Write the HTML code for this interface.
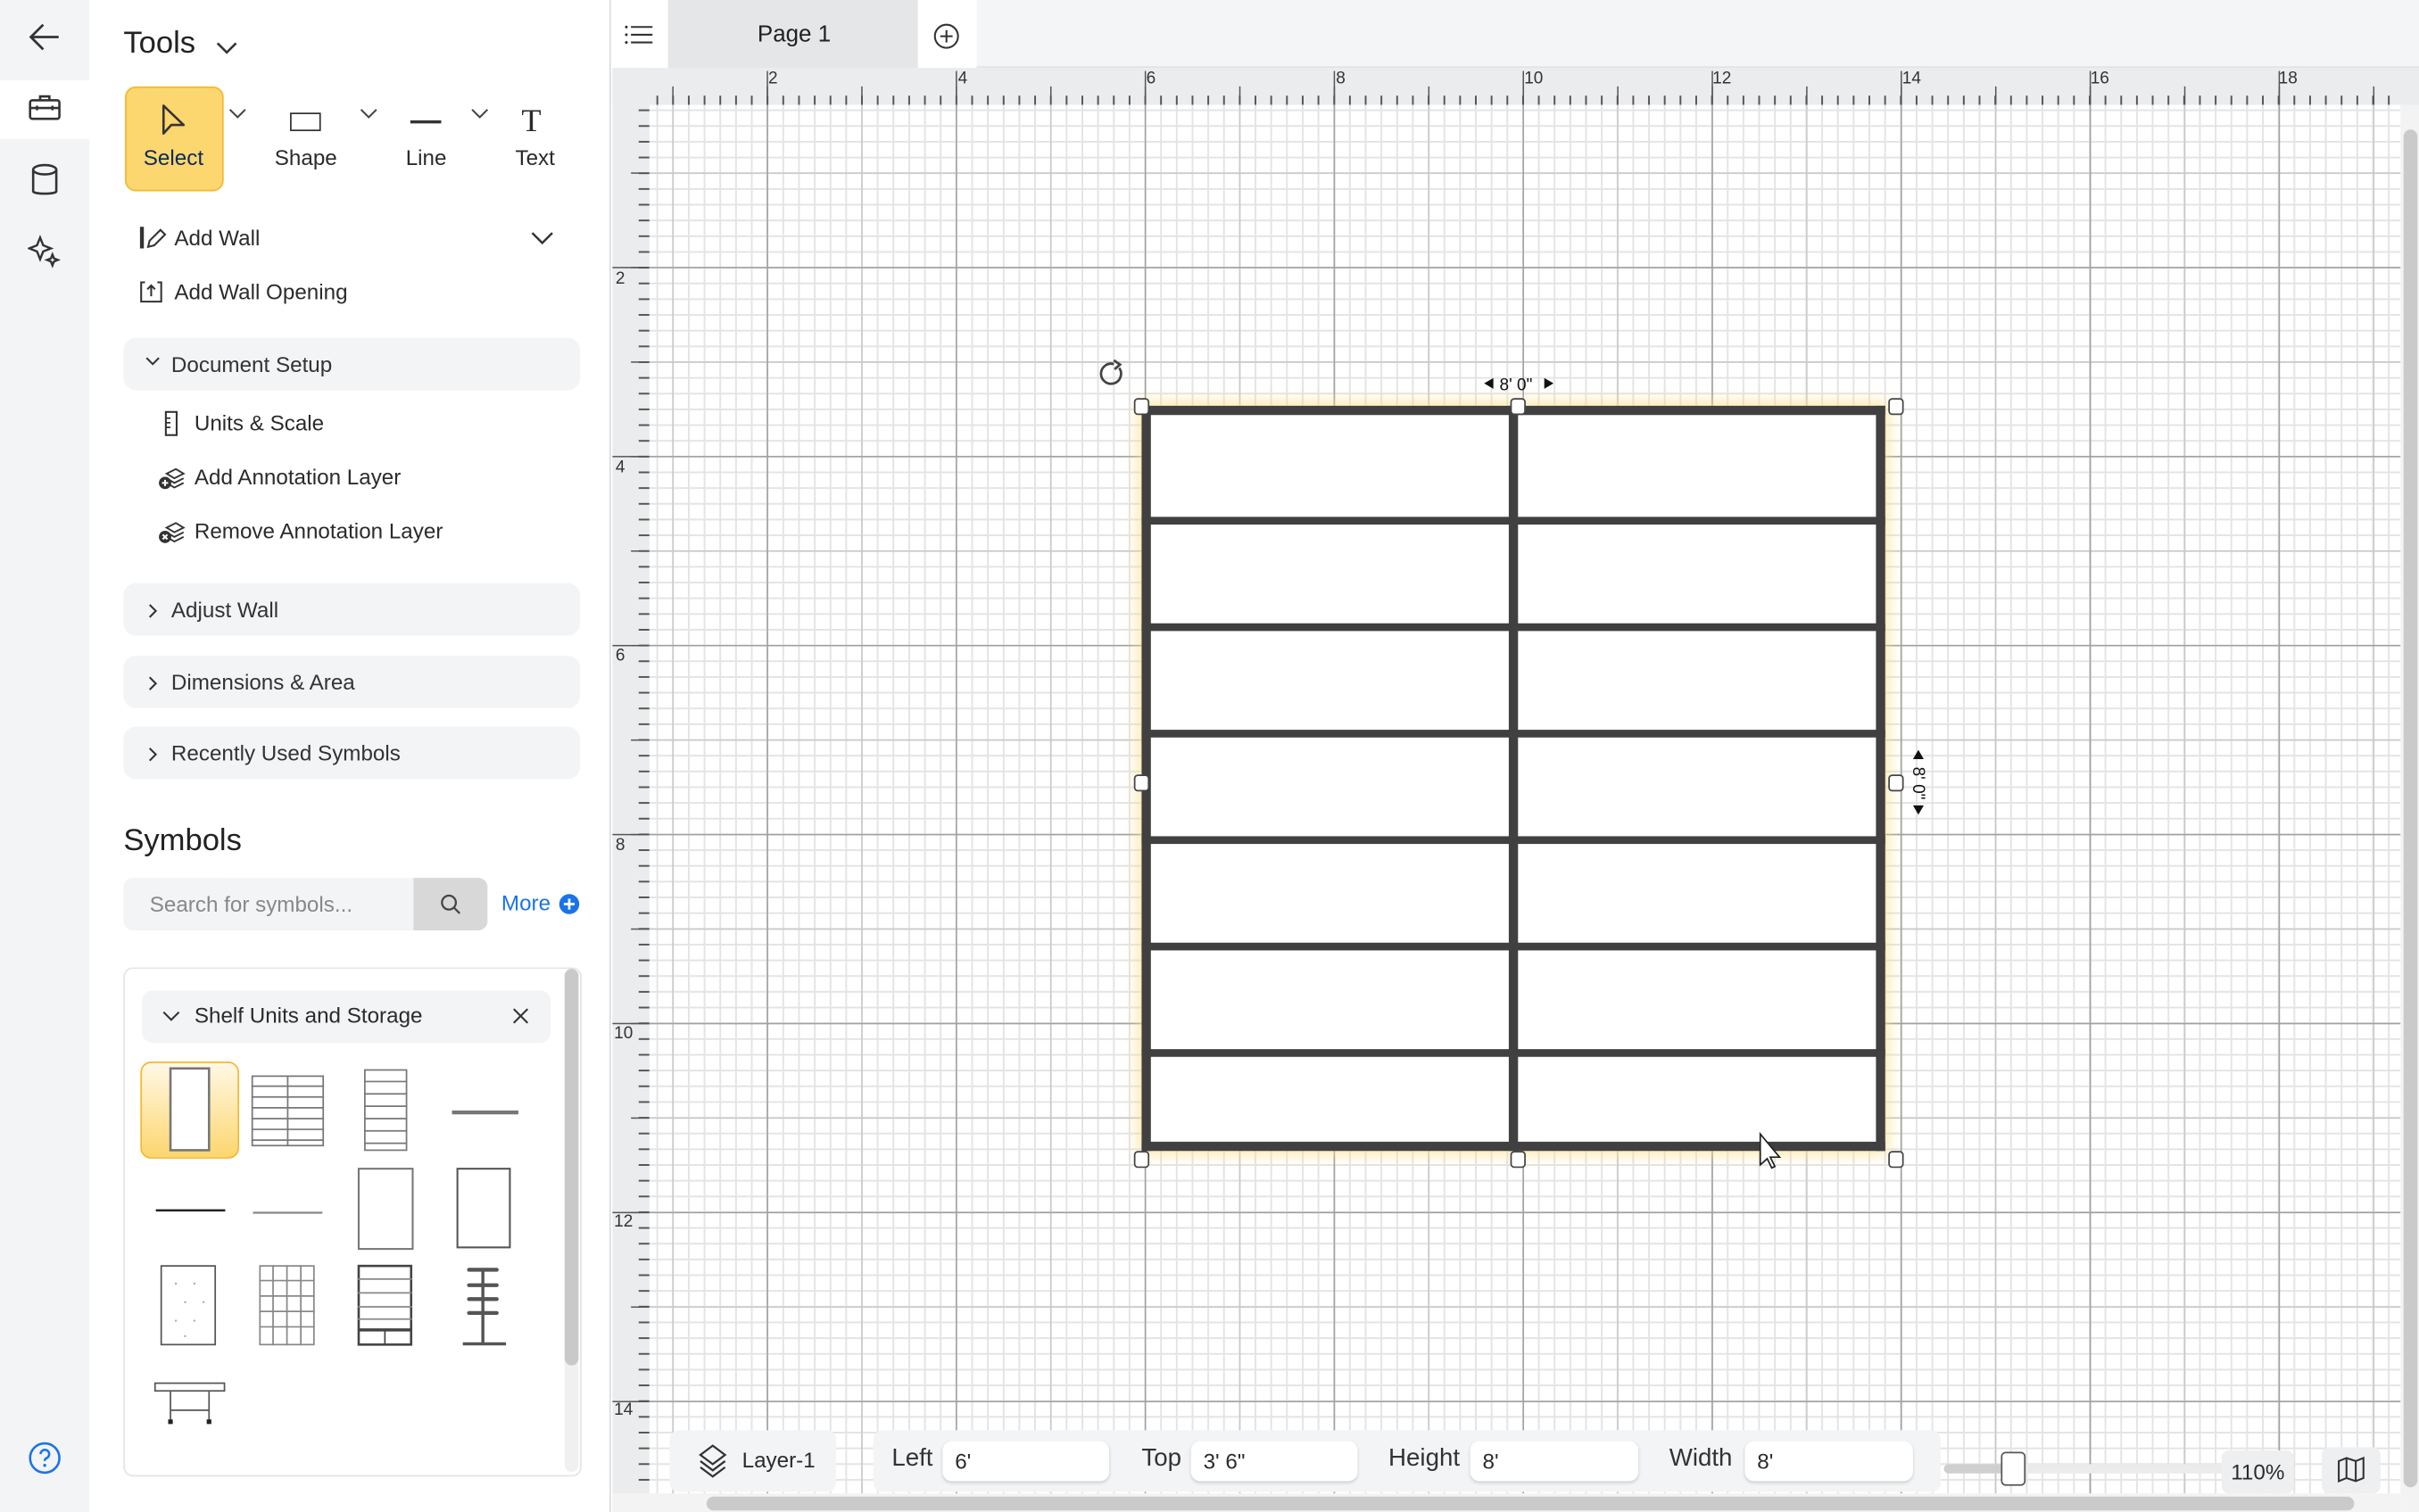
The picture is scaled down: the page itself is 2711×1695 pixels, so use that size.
<!DOCTYPE html>
<html><head><meta charset="utf-8"><style>
*{box-sizing:border-box;margin:0;padding:0}
html,body{width:2711px;height:1695px;overflow:hidden;background:#fff}
#w{position:absolute;left:0;top:0;width:1568px;height:980px;transform:scale(1.72895,1.72959);transform-origin:0 0;font-family:"Liberation Sans",sans-serif;color:#2b2b2b}
.a{position:absolute}
.t{position:absolute;white-space:nowrap}
.acc{position:absolute;left:80px;width:296px;height:34px;background:#f3f4f6;border-radius:8px;font-size:14px;line-height:34px;padding-left:31px;color:#333}
.acc svg{position:absolute;left:14px;top:12px}
.inp{position:absolute;top:934px;height:26px;background:#fff;border-radius:6px;box-shadow:0 1px 2px rgba(0,0,0,.15);font-size:14px;line-height:26px;padding-left:8px}
.lbl{position:absolute;top:937px;font-size:16px;color:#333}
</style></head><body><div id="w">
<!-- left rail -->
<div class="a" style="left:0;top:0;width:58px;height:980px;background:#f3f4f6"></div>
<div class="a" style="left:0;top:52px;width:58px;height:38px;background:#fff"></div>
<svg class="a" style="left:18px;top:14px" width="22" height="20" viewBox="0 0 22 20"><path d="M20 10H2M10 2L2 10l8 8" fill="none" stroke="#333" stroke-width="1.6"/></svg>
<svg class="a" style="left:18px;top:61px" width="22" height="18" viewBox="0 0 22 18"><rect x="1.5" y="4" width="19" height="12" rx="1.5" fill="none" stroke="#333" stroke-width="1.5"/><path d="M8 4V1.5h6V4M1.5 9h19M6 7.5v3M16 7.5v3" fill="none" stroke="#333" stroke-width="1.5"/></svg>
<svg class="a" style="left:20px;top:106px" width="18" height="22" viewBox="0 0 18 22"><ellipse cx="9" cy="4" rx="7.5" ry="3" fill="none" stroke="#333" stroke-width="1.5"/><path d="M1.5 4v14c0 2 15 2 15 0V4" fill="none" stroke="#333" stroke-width="1.5"/></svg>
<svg class="a" style="left:18px;top:152px" width="22" height="22" viewBox="0 0 22 22"><path d="M8 2l2 5 5 2-5 2-2 5-2-5-5-2 5-2z" fill="none" stroke="#333" stroke-width="1.4"/><path d="M16 13l1 2.5 2.5 1-2.5 1-1 2.5-1-2.5-2.5-1 2.5-1z" fill="none" stroke="#333" stroke-width="1.4"/></svg>
<svg class="a" style="left:18px;top:934px" width="22" height="22" viewBox="0 0 22 22"><circle cx="11" cy="11" r="9.5" fill="none" stroke="#1a73e8" stroke-width="1.5"/><path d="M8.3 8.5a2.8 2.8 0 1 1 3.8 2.6c-.8.4-1.1.9-1.1 1.8" fill="none" stroke="#1a73e8" stroke-width="1.5"/><circle cx="11" cy="15.8" r="1" fill="#1a73e8"/></svg>
<!-- panel -->
<div class="a" style="left:58px;top:0;width:338px;height:980px;background:#fff;border-right:1px solid #dcdcdc"></div>
<div class="t" style="left:80px;top:17px;font-size:20px;color:#222">Tools</div>
<svg class="a" style="left:140px;top:27px" width="14" height="9"><path d="M1 1l6 6 6-6" fill="none" stroke="#333" stroke-width="1.5"/></svg>
<div class="a" style="left:81px;top:56px;width:64px;height:68px;background:#fcd66e;border:1px solid #f5b82e;border-radius:7px"></div>
<svg class="a" style="left:104px;top:67px" width="18" height="22" viewBox="0 0 18 22"><path d="M2 1.5v18l5-5.5h8z" fill="none" stroke="#333" stroke-width="1.5" stroke-linejoin="round"/></svg>
<div class="t" style="left:93px;top:94px;font-size:14px;color:#0b2a5b">Select</div>
<svg class="a" style="left:148px;top:70px" width="12" height="8"><path d="M1 1l5 5 5-5" fill="none" stroke="#444" stroke-width="1.2"/></svg>
<div class="a" style="left:188px;top:73px;width:20px;height:12px;border:1.6px solid #333"></div>
<div class="t" style="left:178px;top:94px;font-size:14px">Shape</div>
<svg class="a" style="left:233px;top:70px" width="12" height="8"><path d="M1 1l5 5 5-5" fill="none" stroke="#444" stroke-width="1.2"/></svg>
<div class="a" style="left:266px;top:78px;width:20px;height:1.6px;background:#333"></div>
<div class="t" style="left:263px;top:94px;font-size:14px">Line</div>
<svg class="a" style="left:305px;top:70px" width="12" height="8"><path d="M1 1l5 5 5-5" fill="none" stroke="#444" stroke-width="1.2"/></svg>
<div class="t" style="left:338px;top:66px;font-size:21px;font-family:'Liberation Serif',serif">T</div>
<div class="t" style="left:334px;top:94px;font-size:14px">Text</div>
<svg class="a" style="left:90px;top:146px" width="18" height="16" viewBox="0 0 18 16"><path d="M2 1v14" stroke="#333" stroke-width="2.5"/><path d="M6 14l1-4 7-7 3 3-7 7z" fill="none" stroke="#333" stroke-width="1.2"/></svg>
<div class="t" style="left:113px;top:146px;font-size:14px">Add Wall</div>
<svg class="a" style="left:344px;top:150px" width="15" height="9"><path d="M1 1l6.5 6.5L14 1" fill="none" stroke="#333" stroke-width="1.4"/></svg>
<svg class="a" style="left:90px;top:181px" width="16" height="16" viewBox="0 0 16 16"><path d="M4 2H1.5v12.5h13V2H12M8 11V4M5.5 6.5L8 4l2.5 2.5" fill="none" stroke="#333" stroke-width="1.2"/></svg>
<div class="t" style="left:113px;top:181px;font-size:14px">Add Wall Opening</div>
<div class="acc" style="top:219px">Document Setup<svg width="10" height="7"><path d="M1 1l4 4 4-4" fill="none" stroke="#333" stroke-width="1.2"/></svg></div>
<svg class="a" style="left:106px;top:266px" width="10" height="17"><rect x="1.5" y="1" width="7" height="15" fill="none" stroke="#333" stroke-width="1.2"/><path d="M1.5 5h3M1.5 8h3M1.5 11h3" stroke="#333"/></svg>
<div class="t" style="left:126px;top:266px;font-size:14px">Units &amp; Scale</div>
<svg class="a" style="left:102px;top:302px" width="18" height="16" viewBox="0 0 18 16"><path d="M6 5l6-3 5 3-6 3zM6 8l5 3 6-3M6 11l5 3 6-3" fill="none" stroke="#333" stroke-width="1.1"/><circle cx="5" cy="11" r="4" fill="#333"/><path d="M3 11h4M5 9v4" stroke="#fff" stroke-width="1.2"/></svg>
<div class="t" style="left:126px;top:301px;font-size:14px">Add Annotation Layer</div>
<svg class="a" style="left:102px;top:337px" width="18" height="16" viewBox="0 0 18 16"><path d="M6 5l6-3 5 3-6 3zM6 8l5 3 6-3M6 11l5 3 6-3" fill="none" stroke="#333" stroke-width="1.1"/><circle cx="5" cy="11" r="4" fill="#333"/><path d="M3.5 9.5l3 3M6.5 9.5l-3 3" stroke="#fff" stroke-width="1.2"/></svg>
<div class="t" style="left:126px;top:336px;font-size:14px">Remove Annotation Layer</div>
<div class="acc" style="top:378px">Adjust Wall<svg width="7" height="10" style="left:16px;top:13px"><path d="M1 1l4 4-4 4" fill="none" stroke="#333" stroke-width="1.2"/></svg></div>
<div class="acc" style="top:425px">Dimensions &amp; Area<svg width="7" height="10" style="left:16px;top:13px"><path d="M1 1l4 4-4 4" fill="none" stroke="#333" stroke-width="1.2"/></svg></div>
<div class="acc" style="top:471px">Recently Used Symbols<svg width="7" height="10" style="left:16px;top:13px"><path d="M1 1l4 4-4 4" fill="none" stroke="#333" stroke-width="1.2"/></svg></div>
<div class="t" style="left:80px;top:534px;font-size:20px;color:#222">Symbols</div>
<div class="a" style="left:80px;top:569px;width:188px;height:34px;background:#f3f4f6;border-radius:6px 0 0 6px;font-size:14px;line-height:34px;padding-left:17px;color:#888">Search for symbols...</div>
<div class="a" style="left:268px;top:569px;width:48px;height:34px;background:#d8d8d8;border-radius:0 6px 6px 0"></div>
<svg class="a" style="left:285px;top:579px" width="14" height="14"><circle cx="6" cy="6" r="4.5" fill="none" stroke="#444" stroke-width="1.3"/><path d="M9.5 9.5L13 13" stroke="#444" stroke-width="1.3"/></svg>
<div class="t" style="left:325px;top:577px;font-size:14px;color:#1a73e8">More</div>
<svg class="a" style="left:362px;top:579px" width="14" height="14"><circle cx="7" cy="7" r="6.5" fill="#1a73e8"/><path d="M3.5 7h7M7 3.5v7" stroke="#fff" stroke-width="1.6"/></svg>
<div class="a" style="left:80px;top:627px;width:297px;height:330px;border:1px solid #e4e4e4;border-radius:6px"></div>
<div class="a" style="left:366px;top:628px;width:9px;height:326px;background:#f0f0f0;border-radius:5px"></div>
<div class="a" style="left:366px;top:628px;width:9px;height:257px;background:#c9c9c9;border-radius:5px"></div>
<div class="a" style="left:92px;top:642px;width:265px;height:34px;background:#f3f4f6;border-radius:7px"></div>
<svg class="a" style="left:105px;top:655px" width="12" height="8"><path d="M1 1l5 5 5-5" fill="none" stroke="#333" stroke-width="1.2"/></svg>
<div class="t" style="left:126px;top:650px;font-size:14px">Shelf Units and Storage</div>
<svg class="a" style="left:332px;top:653px" width="11" height="11"><path d="M1 1l9 9M10 1l-9 9" stroke="#333" stroke-width="1.2"/></svg>
<div class="a" style="left:91px;top:688px;width:64px;height:63px;border:1px solid #f5b82e;border-radius:7px;background:linear-gradient(#fff8e6,#fcd66e)"></div>
<svg class="a" style="left:90px;top:688px" width="270" height="250" viewBox="90 688 270 250" fill="none" stroke="#777">
<rect x="110.5" y="692.5" width="25" height="53" fill="#fff" stroke-width="1.5"/>
<g stroke-width="1"><rect x="163.5" y="697.5" width="46" height="45"/><path d="M186.5 697v46M163 704h47M163 711h47M163 718h47M163 725h47M163 732h47M163 739h47"/></g>
<g stroke-width="1"><rect x="236.5" y="693.5" width="27" height="52"/><path d="M236 701h28M236 709h28M236 717h28M236 725h28M236 733h28M236 741h28"/></g>
<path d="M293 721h43" stroke="#777" stroke-width="2.5"/>
<path d="M101 784.5h45" stroke="#222" stroke-width="1.5"/>
<path d="M164 786h45" stroke="#888" stroke-width="1.3"/>
<rect x="232.5" y="757.5" width="35" height="52" stroke-width="1.2"/>
<rect x="296.5" y="757.5" width="34" height="51" stroke="#555" stroke-width="1.2"/>
<rect x="104.5" y="820.5" width="35" height="51" stroke="#555"/>
<g fill="#aaa" stroke="none"><circle cx="114" cy="832" r=".7"/><circle cx="126" cy="832" r=".7"/><circle cx="120" cy="844" r=".7"/><circle cx="132" cy="844" r=".7"/><circle cx="114" cy="856" r=".7"/><circle cx="126" cy="856" r=".7"/><circle cx="120" cy="866" r=".7"/></g>
<g stroke="#888"><rect x="168.5" y="820.5" width="35" height="51"/><path d="M177 820v52M186 820v52M195 820v52M168 830h36M168 840h36M168 850h36M168 860h36"/></g>
<g stroke="#444"><rect x="232.5" y="820.5" width="34" height="51" stroke-width="1.5"/><path d="M232 829h35M232 838h35M232 847h35M232 855h35" stroke="#888"/><path d="M232 862h35" stroke-width="2"/><path d="M249.5 862v10"/></g>
<g stroke="#555"><path d="M313 822v49M300 871h28" stroke-width="2"/><path d="M304 823h18M304 833h18M304 842h18M304 851h18" stroke-width="2.5" stroke-linecap="round"/></g>
<g stroke="#555"><rect x="100.5" y="896.5" width="45" height="5"/><path d="M110.5 902v19M135.5 902v19M110 914h26"/><path d="M110.5 920v3M135.5 920v3" stroke="#222" stroke-width="3"/></g>
</svg>
<!-- top tabs -->
<div class="a" style="left:397px;top:0;width:1171px;height:44px;background:#f4f5f7;border-bottom:1px solid #e2e2e2"></div>
<div class="a" style="left:397px;top:0;width:36px;height:44px;background:#fff"></div>
<svg class="a" style="left:405px;top:16px" width="18" height="13"><path d="M4 1.5h14M4 6.5h14M4 11.5h14" stroke="#333" stroke-width="1.2"/><circle cx="1" cy="1.5" r=".9" fill="#333"/><circle cx="1" cy="6.5" r=".9" fill="#333"/><circle cx="1" cy="11.5" r=".9" fill="#333"/></svg>
<div class="a" style="left:433px;top:0;width:162px;height:44px;background:#e5e6e8"></div>
<div class="t" style="left:491px;top:14px;font-size:15px;color:#222">Page 1</div>
<div class="a" style="left:595px;top:0;width:38px;height:44px;background:#fff"></div>
<svg class="a" style="left:605px;top:15px" width="17" height="17"><circle cx="8.5" cy="8.5" r="7.5" fill="none" stroke="#333" stroke-width="1.2"/><path d="M4.5 8.5h8M8.5 4.5v8" stroke="#333" stroke-width="1.2"/></svg>
<!-- rulers -->
<div class="a" style="left:397px;top:44px;width:1171px;height:24px;background:#ebecee"></div>
<div class="a" style="left:397px;top:44px;width:24px;height:936px;background:#ebecee"></div>
<div class="a" style="left:421px;top:56px;width:1135px;height:12px;background-image:linear-gradient(to right,#555 1px,transparent 1px);background-size:10.2083px 6px;background-repeat:repeat-x;background-position:-46.5px 6px"></div>
<div class="a" style="left:421px;top:44px;width:1135px;height:24px;background-image:linear-gradient(to right,#555 1px,transparent 1px);background-size:61.25px 12px;background-repeat:repeat-x;background-position:-46.5px 12px"></div>
<div class="a" style="left:421px;top:44px;width:1135px;height:24px;background-image:linear-gradient(to right,#555 1px,transparent 1px);background-size:122.5px 24px;background-repeat:repeat-x;background-position:-46.5px 2px"></div>
<div class="a" style="left:406px;top:68px;width:15px;height:900px;background-image:linear-gradient(#555 1px,transparent 1px);background-size:7px 10.2083px;background-repeat:repeat-y;background-position:8px -17.5px"></div>
<div class="a" style="left:406px;top:68px;width:15px;height:900px;background-image:linear-gradient(#555 1px,transparent 1px);background-size:12px 61.25px;background-repeat:repeat-y;background-position:3px -17.5px"></div>
<div class="a" style="left:397px;top:68px;width:24px;height:900px;background-image:linear-gradient(#555 1px,transparent 1px);background-size:24px 122.5px;background-repeat:repeat-y;background-position:0 105px"></div>
<div style="font-size:11px;color:#333">
<div class="t" style="left:498px;top:45px">2</div><div class="t" style="left:621px;top:45px">4</div><div class="t" style="left:743px;top:45px">6</div><div class="t" style="left:866px;top:45px">8</div><div class="t" style="left:988px;top:45px">10</div><div class="t" style="left:1110px;top:45px">12</div><div class="t" style="left:1233px;top:45px">14</div><div class="t" style="left:1355px;top:45px">16</div><div class="t" style="left:1477px;top:45px">18</div>
<div class="t" style="left:399px;top:175px">2</div><div class="t" style="left:399px;top:297px">4</div><div class="t" style="left:399px;top:419px">6</div><div class="t" style="left:399px;top:542px">8</div><div class="t" style="left:398px;top:664px">10</div><div class="t" style="left:398px;top:786px">12</div><div class="t" style="left:398px;top:908px">14</div>
</div>
<!-- canvas -->
<div class="a" style="left:421px;top:68px;width:1135px;height:900px;background-color:#fff;
background-image:linear-gradient(to right,#a0a0a0 1px,transparent 1px),linear-gradient(#a0a0a0 1px,transparent 1px),linear-gradient(to right,#c8c8c8 1px,transparent 1px),linear-gradient(#c8c8c8 1px,transparent 1px),linear-gradient(to right,#e4e4e4 1px,transparent 1px),linear-gradient(#e4e4e4 1px,transparent 1px);
background-size:122.5px 122.5px,122.5px 122.5px,61.25px 61.25px,61.25px 61.25px,10.2083px 10.2083px,10.2083px 10.2083px;
background-position:-46.5px 105px,-46.5px 105px,-46.5px -17.5px,-46.5px -17.5px,-46.5px -17.5px,-46.5px -17.5px"></div>
<div class="a" style="left:740px;top:263px;width:482px;height:483px;box-shadow:0 0 9px 2px rgba(252,220,130,.75)"></div>
<svg class="a" style="left:0;top:0" width="1568" height="980" viewBox="0 0 1568 980">
<rect x="740" y="263" width="482" height="483" fill="#fff"/>
<g fill="#404040">
<rect x="740" y="263" width="482" height="6"/><rect x="740" y="740" width="482" height="6"/>
<rect x="740" y="263" width="6" height="483"/><rect x="1216" y="263" width="6" height="483"/>
<rect x="978" y="263" width="6" height="483"/>
<rect x="740" y="335" width="482" height="5"/><rect x="740" y="404" width="482" height="5"/><rect x="740" y="473" width="482" height="5"/><rect x="740" y="542" width="482" height="5"/><rect x="740" y="611" width="482" height="5"/><rect x="740" y="680" width="482" height="5"/>
</g>
<g fill="#fff" stroke="#444" stroke-width="1">
<rect x="735.5" y="258.5" width="9" height="10" rx="2"/><rect x="979.5" y="258.5" width="9" height="10" rx="2"/><rect x="1224.5" y="258.5" width="9" height="10" rx="2"/>
<rect x="735.5" y="502.5" width="9" height="10" rx="2"/><rect x="1224.5" y="502.5" width="9" height="10" rx="2"/>
<rect x="735.5" y="746.5" width="9" height="10" rx="2"/><rect x="979.5" y="746.5" width="9" height="10" rx="2"/><rect x="1224.5" y="746.5" width="9" height="10" rx="2"/>
</g>
<path d="M725.5 238.5A6.5 6.5 0 1 1 722 236" fill="none" stroke="#444" stroke-width="1.6"/><path d="M722 233.5l4 2.8-3.5 3" fill="none" stroke="#444" stroke-width="1.6"/>
<path d="M968 245v7l-6-3.5z M1001 245v7l6-3.5z" fill="#111"/>
<text x="972" y="253" font-size="11" font-family="Liberation Sans" fill="#111">8' 0"</text>
<path d="M1240 492h7l-3.5-6z M1240 522h7l-3.5 6z" fill="#111"/>
<text transform="translate(1240,497) rotate(90)" font-size="11" font-family="Liberation Sans" fill="#111">8' 0"</text>
<path d="M1141 735v20l4.5-4 3 6 2-1-3-6h6z" fill="#fff" stroke="#222" stroke-width="1"/>
</svg>
<!-- scrollbars -->
<div class="a" style="left:1556px;top:68px;width:12px;height:912px;background:#f3f3f3"></div>
<div class="a" style="left:1558px;top:84px;width:9px;height:880px;background:#cacaca;border-radius:5px"></div>
<div class="a" style="left:397px;top:968px;width:1159px;height:12px;background:#f3f3f3"></div>
<div class="a" style="left:458px;top:970px;width:1068px;height:9px;background:#cacaca;border-radius:5px"></div>
<!-- bottom bar -->
<div class="a" style="left:434px;top:927px;width:108px;height:40px;background:#f3f4f6;border-radius:6px"></div>
<svg class="a" style="left:452px;top:936px" width="20" height="22" viewBox="0 0 20 22"><path d="M10 1l8 6-8 6-8-6z" fill="none" stroke="#333" stroke-width="1.3"/><path d="M2 11l8 6 8-6M2 15l8 6 8-6" fill="none" stroke="#333" stroke-width="1.3"/></svg>
<div class="t" style="left:481px;top:938px;font-size:14px">Layer-1</div>
<div class="a" style="left:566px;top:927px;width:692px;height:40px;background:#f3f4f6;border-radius:6px"></div>
<div class="lbl" style="left:578px">Left</div><div class="inp" style="left:611px;width:108px">6'</div>
<div class="lbl" style="left:740px">Top</div><div class="inp" style="left:772px;width:108px">3' 6"</div>
<div class="lbl" style="left:900px">Height</div><div class="inp" style="left:953px;width:109px">8'</div>
<div class="lbl" style="left:1082px">Width</div><div class="inp" style="left:1131px;width:109px">8'</div>
<div class="a" style="left:1260px;top:949px;width:45px;height:6px;background:#cfcfcf;border-radius:3px"></div>
<div class="a" style="left:1305px;top:949px;width:135px;height:6px;background:#ebebeb"></div>
<div class="a" style="left:1297px;top:941px;width:16px;height:22px;background:#fff;border:1.5px solid #555;border-radius:3px"></div>
<div class="a" style="left:1440px;top:940px;width:47px;height:28px;background:#eeeff1;border-radius:5px;font-size:14px;line-height:28px;text-align:center">110%</div>
<div class="a" style="left:1505px;top:938px;width:38px;height:30px;background:#eeeff1;border-radius:5px"></div>
<svg class="a" style="left:1515px;top:944px" width="18" height="17" viewBox="0 0 18 17"><path d="M1 3l5-2 6 2 5-2v13l-5 2-6-2-5 2z M6 1v13M12 3v13" fill="none" stroke="#333" stroke-width="1.2"/></svg>
</div></body></html>
